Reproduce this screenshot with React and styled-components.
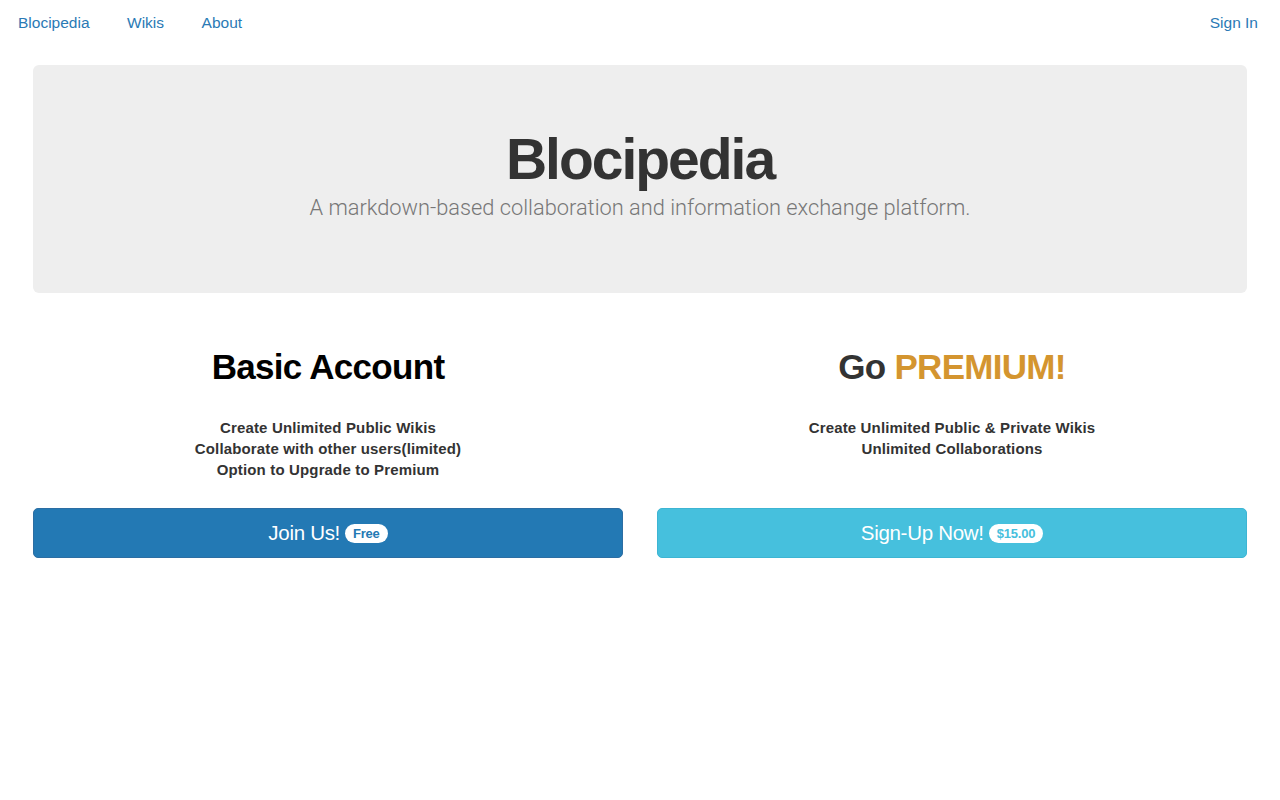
import React from "react";
import styled, { createGlobalStyle } from "styled-components";

const GlobalStyle = createGlobalStyle`
  body {
    margin: 0;
    background: #fff;
    font-family: "Liberation Sans", Arial, sans-serif;
    color: #333;
  }
`;

const Nav = styled.nav`
  display: flex;
  align-items: center;
  justify-content: space-between;
  height: 45px;
  padding: 0 22px 0 18px;
`;

const NavGroup = styled.div`
  display: flex;
  gap: 37.5px;
`;

const NavLink = styled.a`
  color: #2a7ab5;
  font-size: 15.5px;
  text-decoration: none;
`;

const Jumbotron = styled.header`
  margin: 20px 33px 0;
  height: 228px;
  box-sizing: border-box;
  padding-top: 62px;
  background: #eee;
  border-radius: 6px;
  text-align: center;
`;

const Title = styled.h1`
  margin: 0;
  font-size: 57px;
  font-weight: bold;
  line-height: 64px;
  color: #333;
  letter-spacing: -2px;
`;

const Lead = styled.p`
  margin: 4px 0 0;
  font-family: Roboto, "Liberation Sans", sans-serif;
  font-weight: 300;
  font-size: 21.8px;
  color: #777;
`;

const Plans = styled.section`
  display: grid;
  grid-template-columns: 1fr 1fr;
  gap: 34px;
  margin: 50px 33px 0;
`;

const Plan = styled.div`
  display: flex;
  flex-direction: column;
  align-items: center;
  text-align: center;
`;

const PlanTitle = styled.h2`
  margin: 0;
  height: 47px;
  font-size: 35px;
  line-height: 47px;
  font-weight: bold;
  color: ${(p) => p.$color || "#000"};
  letter-spacing: -0.7px;
`;

const Highlight = styled.span`
  color: #d4952f;
`;

const Features = styled.ul`
  list-style: none;
  margin: 27px 0 0;
  padding: 0;
  height: 91px;
  font-size: 15px;
  font-weight: bold;
  line-height: 21px;
  letter-spacing: 0.15px;
  color: #333;
`;

const Button = styled.a`
  display: flex;
  align-items: center;
  justify-content: center;
  gap: 5px;
  align-self: stretch;
  height: 50px;
  box-sizing: border-box;
  border: 1px solid ${(p) => p.$border};
  border-radius: 5px;
  background: ${(p) => p.$bg};
  color: #fff;
  font-size: 20.5px;
  letter-spacing: -0.3px;
  text-decoration: none;
`;

const Badge = styled.span`
  display: inline-block;
  padding: 3px 8px;
  border-radius: 10px;
  background: #fff;
  color: ${(p) => p.$color};
  font-size: 13px;
  font-weight: bold;
  line-height: 13px;
  letter-spacing: -0.2px;
`;

export default function App() {
  return (
    <>
      <GlobalStyle />
      <Nav>
        <NavGroup>
          <NavLink href="#">Blocipedia</NavLink>
          <NavLink href="#">Wikis</NavLink>
          <NavLink href="#">About</NavLink>
        </NavGroup>
        <NavLink href="#">Sign In</NavLink>
      </Nav>

      <Jumbotron>
        <Title>Blocipedia</Title>
        <Lead>A markdown-based collaboration and information exchange platform.</Lead>
      </Jumbotron>

      <Plans>
        <Plan>
          <PlanTitle>Basic Account</PlanTitle>
          <Features>
            <li>Create Unlimited Public Wikis</li>
            <li>Collaborate with other users(limited)</li>
            <li>Option to Upgrade to Premium</li>
          </Features>
          <Button href="#" $bg="#2379b4" $border="#2c6ea3">
            Join Us! <Badge $color="#2379b4">Free</Badge>
          </Button>
        </Plan>
        <Plan>
          <PlanTitle $color="#333">
            Go <Highlight>PREMIUM!</Highlight>
          </PlanTitle>
          <Features>
            <li>Create Unlimited Public &amp; Private Wikis</li>
            <li>Unlimited Collaborations</li>
          </Features>
          <Button href="#" $bg="#46c0dd" $border="#3db5d3">
            Sign-Up Now! <Badge $color="#46c0dd">$15.00</Badge>
          </Button>
        </Plan>
      </Plans>
    </>
  );
}
